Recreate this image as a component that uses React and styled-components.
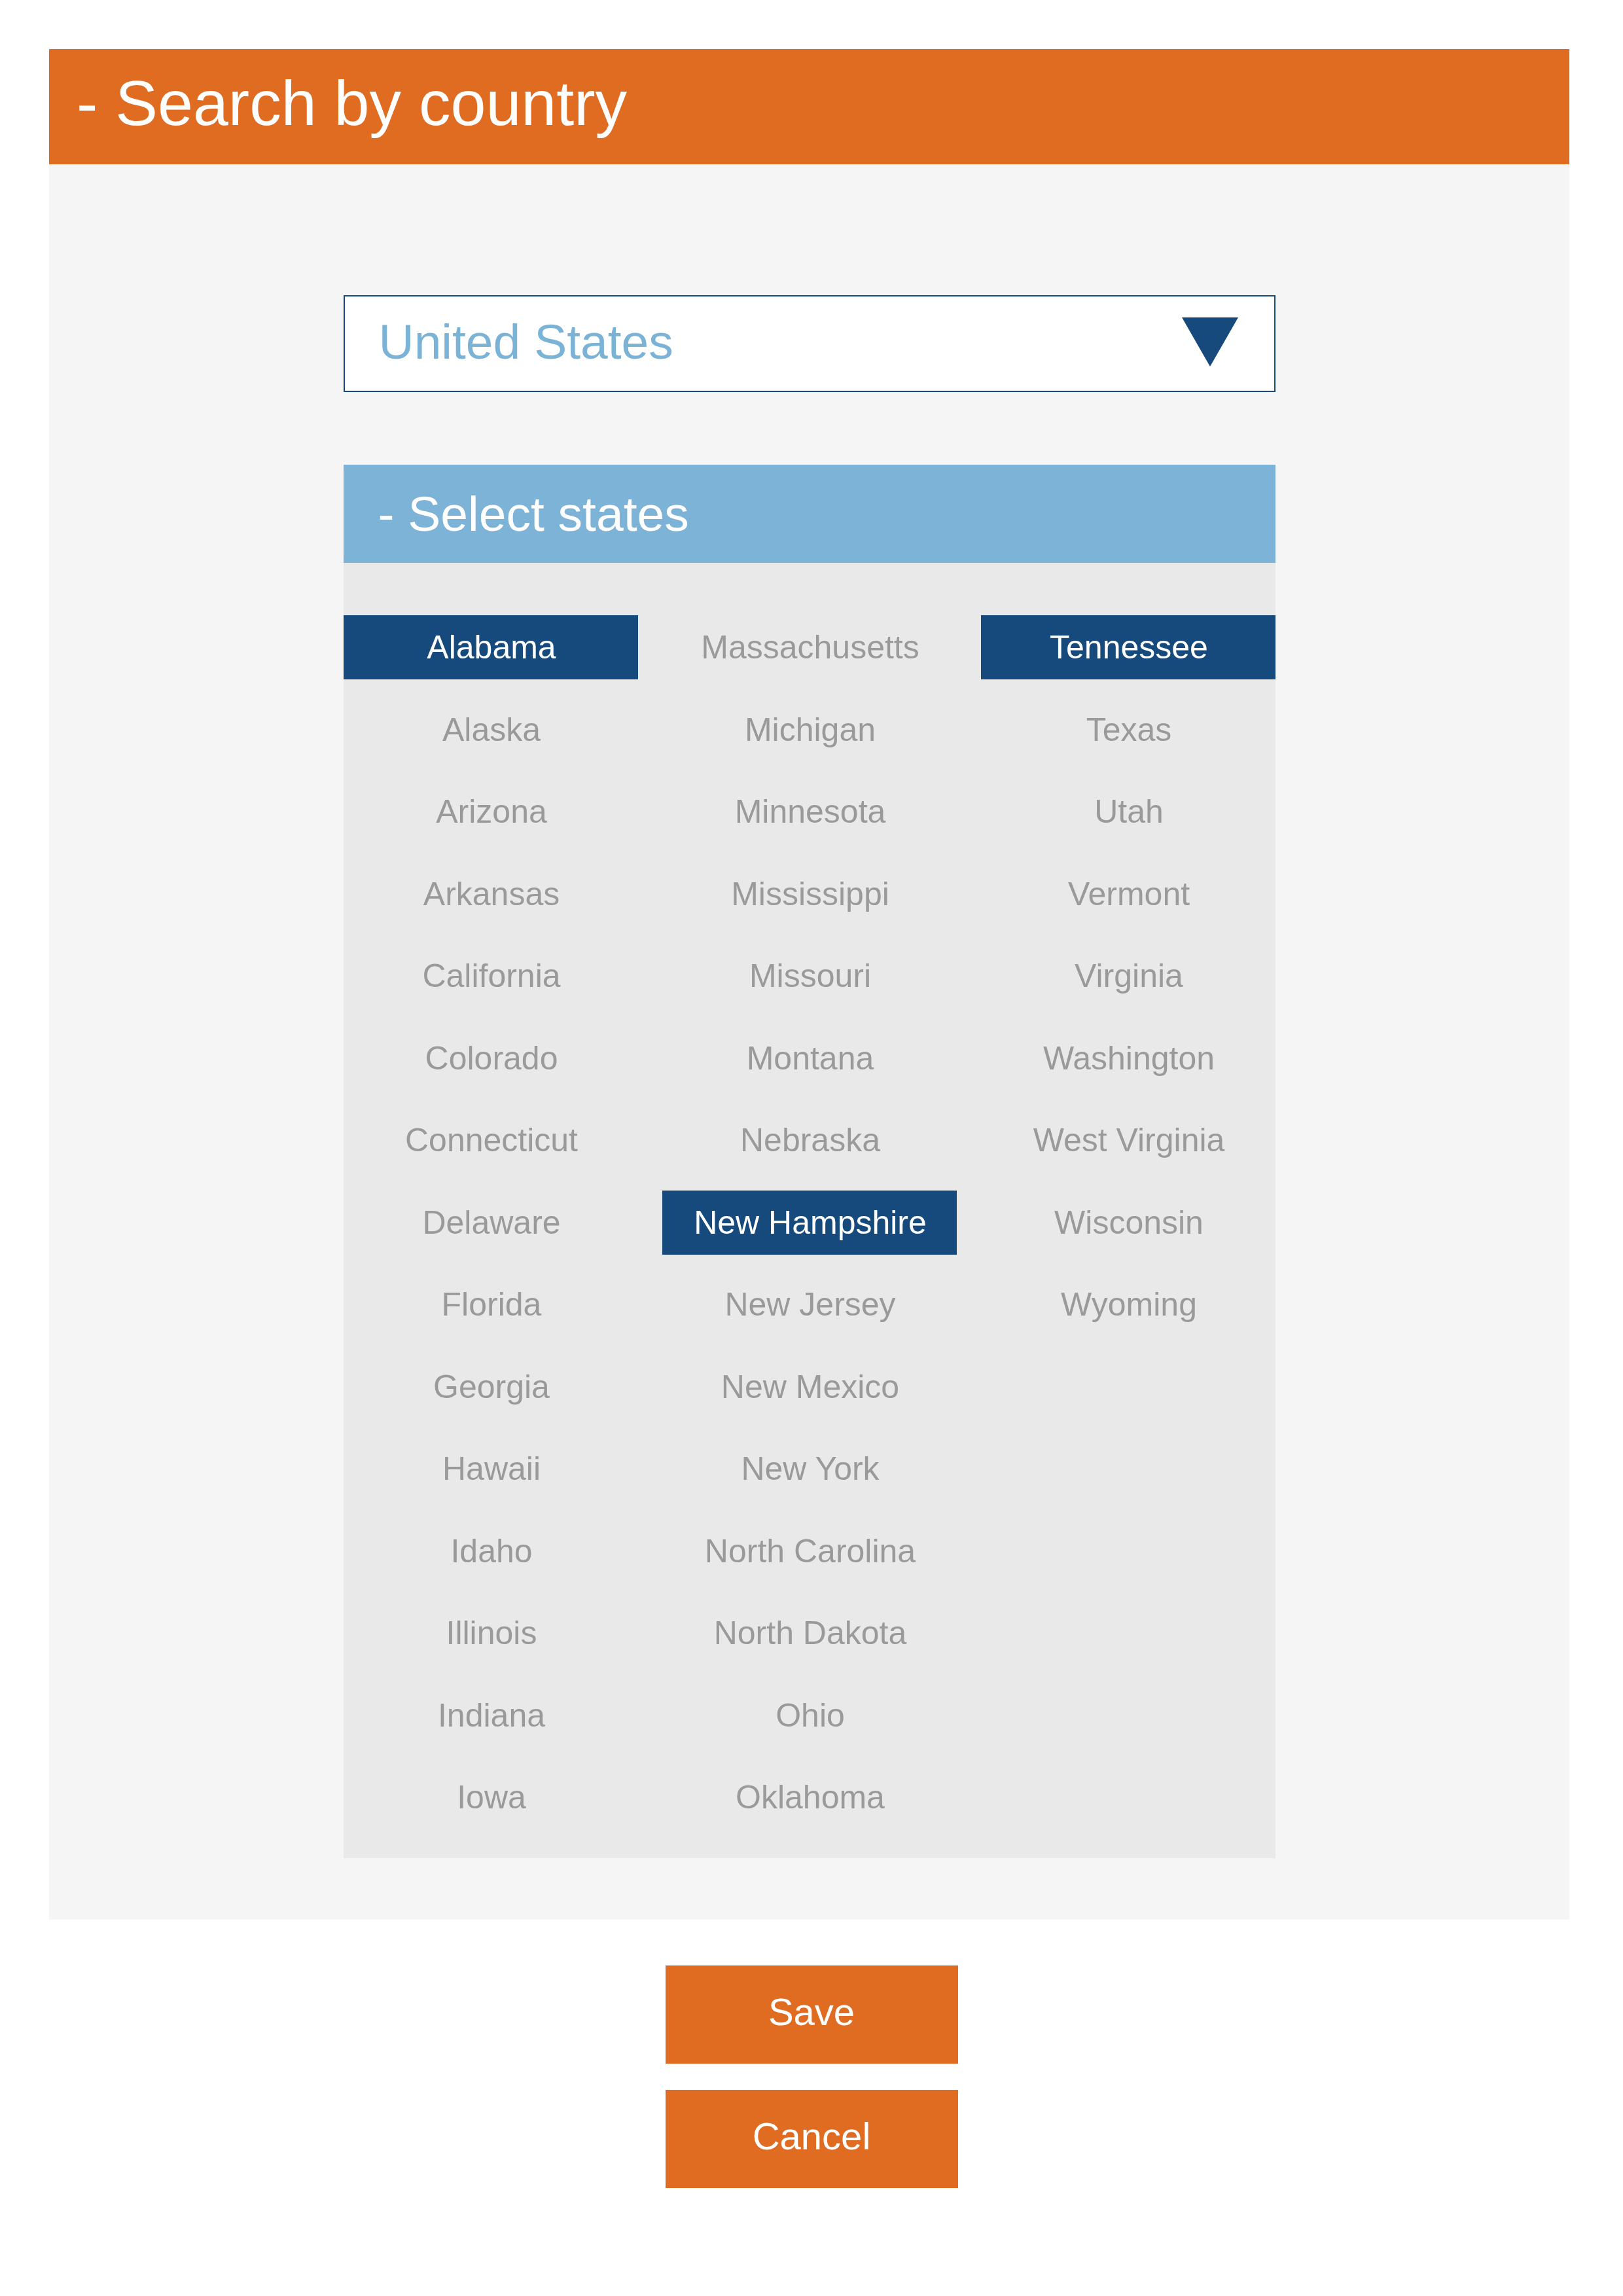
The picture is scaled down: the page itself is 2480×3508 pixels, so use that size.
import React, { useState } from 'react'
import styled, { createGlobalStyle } from 'styled-components'

const GlobalStyle = createGlobalStyle`
  html, body {
    margin: 0;
    padding: 0;
    background: #ffffff;
  }
  body {
    font-family: "Liberation Sans", Arial, sans-serif;
  }
`

const Page = styled.div`
  padding: 75px 82px 120px 75px;
  display: flex;
  flex-direction: column;
`

const Card = styled.section`
  display: flex;
  flex-direction: column;
`

const Header = styled.header`
  height: 176px;
  box-sizing: border-box;
  background: #e06c22;
  color: #fff;
  display: flex;
  align-items: center;
  padding: 0 0 12px 42px;
  font-size: 97px;
  line-height: 1;
`

const Panel = styled.div`
  background: #f5f5f5;
  padding: 200px 0 94px;
  display: flex;
  flex-direction: column;
  align-items: center;
`

const Column = styled.div`
  width: 1424px;
  display: flex;
  flex-direction: column;
`

const Dropdown = styled.div`
  height: 148px;
  box-sizing: border-box;
  border: 2px solid #1a4a7a;
  background: #fff;
  display: flex;
  align-items: center;
  justify-content: space-between;
  padding: 0 55px 6px 52px;
  margin-bottom: 111px;
  cursor: pointer;
`

const DropdownValue = styled.span`
  font-size: 75px;
  line-height: 1;
  color: #7bb3d7;
`

const Caret = styled.svg`
  width: 86px;
  height: 75px;
  display: block;
`

const SubHeader = styled.div`
  height: 150px;
  box-sizing: border-box;
  background: #7db3d7;
  color: #fff;
  display: flex;
  align-items: center;
  padding: 0 0 0 53px;
  font-size: 75px;
  line-height: 1;
`

const StateGrid = styled.div`
  background: #e9e9e9;
  padding: 80px 0 44px;
  display: grid;
  grid-template-columns: repeat(3, 450px);
  grid-template-rows: repeat(15, 98px);
  grid-auto-flow: column;
  column-gap: 37px;
  row-gap: 27.5px;
`

const StateItem = styled.div`
  display: flex;
  align-items: center;
  justify-content: center;
  font-size: 50px;
  line-height: 1;
  padding-left: 3px;
  cursor: pointer;
  background: ${p => (p.$active ? '#174a7c' : 'transparent')};
  color: ${p => (p.$active ? '#ffffff' : '#9a9a9a')};
`

const Actions = styled.div`
  display: flex;
  flex-direction: column;
  align-items: center;
  gap: 40px;
  margin: 70px 0 0 -75px;
  width: 2480px;
`

const Button = styled.button`
  width: 447px;
  height: 150px;
  border: none;
  background: #e06c22;
  color: #fff;
  font-family: "Liberation Sans", Arial, sans-serif;
  font-size: 58px;
  line-height: 1;
  padding: 0 0 8px;
  cursor: pointer;
`

const STATES = [
  'Alabama', 'Alaska', 'Arizona', 'Arkansas', 'California', 'Colorado',
  'Connecticut', 'Delaware', 'Florida', 'Georgia', 'Hawaii', 'Idaho',
  'Illinois', 'Indiana', 'Iowa',
  'Massachusetts', 'Michigan', 'Minnesota', 'Mississippi', 'Missouri',
  'Montana', 'Nebraska', 'New Hampshire', 'New Jersey', 'New Mexico',
  'New York', 'North Carolina', 'North Dakota', 'Ohio', 'Oklahoma',
  'Tennessee', 'Texas', 'Utah', 'Vermont', 'Virginia', 'Washington',
  'West Virginia', 'Wisconsin', 'Wyoming',
]

export default function App() {
  const [selected, setSelected] = useState(['Alabama', 'New Hampshire', 'Tennessee'])

  const toggle = name =>
    setSelected(s => (s.includes(name) ? s.filter(n => n !== name) : [...s, name]))

  return (
    <>
      <GlobalStyle />
      <Page>
        <Card>
          <Header>- Search by country</Header>
          <Panel>
            <Column>
              <Dropdown>
                <DropdownValue>United States</DropdownValue>
                <Caret viewBox="0 0 86 75">
                  <polygon points="0,0 86,0 43,75" fill="#174a7c" />
                </Caret>
              </Dropdown>
              <SubHeader>- Select states</SubHeader>
              <StateGrid>
                {STATES.map(name => (
                  <StateItem
                    key={name}
                    $active={selected.includes(name)}
                    onClick={() => toggle(name)}
                  >
                    {name}
                  </StateItem>
                ))}
              </StateGrid>
            </Column>
          </Panel>
        </Card>
        <Actions>
          <Button>Save</Button>
          <Button>Cancel</Button>
        </Actions>
      </Page>
    </>
  )
}
